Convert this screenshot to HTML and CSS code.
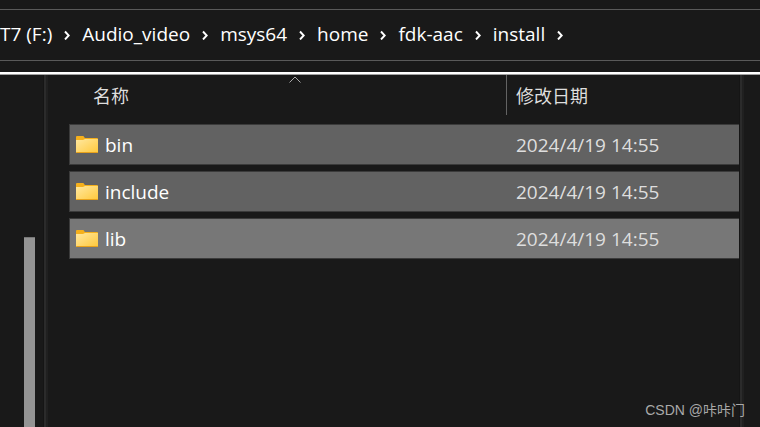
FILE: index.html
```html
<!DOCTYPE html>
<html lang="zh-CN">
<head>
  <meta charset="UTF-8" />
  <meta name="viewport" content="width=device-width, initial-scale=1.0"/>
  <title>install</title>
  <link rel="stylesheet" href="styles.css">
</head>
<body>
  <!-- Shared icons -->
  <svg class="sprite" aria-hidden="true">
    <defs>
      <linearGradient id="folderFill" x1="0" y1="0" x2="1" y2="1">
        <stop offset="0" stop-color="#ffe8a0"/>
        <stop offset="1" stop-color="#ffc83a"/>
      </linearGradient>
    </defs>
    <symbol id="folder" viewBox="0 0 22 18">
      <path d="M0 1Q0 0 1 0H7Q8 0 8 1L9 2H21Q22 2 22 3V8H0Z" fill="#f5b01c"/>
      <path d="M0 4H7L9 3H22V16Q22 17 21 17H1Q0 17 0 16Z" fill="url(#folderFill)"/>
      <path d="M0 16H22Q22 17 21 17H1Q0 17 0 16Z" fill="#e8a21b"/>
    </symbol>
    <symbol id="chevron" viewBox="0 0 6 10">
      <path d="M1 1.500L4.700 5.500L1 9.500" fill="none" stroke="#fff" stroke-width="1.900"/>
    </symbol>
  </svg>

  <!-- Address bar -->
  <nav class="address">
    <a href="#">T7 (F:)</a>
    <svg class="chevron"><use href="#chevron"/></svg>
    <a href="#">Audio_video</a>
    <svg class="chevron"><use href="#chevron"/></svg>
    <a href="#">msys64</a>
    <svg class="chevron"><use href="#chevron"/></svg>
    <a href="#">home</a>
    <svg class="chevron"><use href="#chevron"/></svg>
    <a href="#">fdk-aac</a>
    <svg class="chevron"><use href="#chevron"/></svg>
    <a href="#">install</a>
    <svg class="chevron"><use href="#chevron"/></svg>
  </nav>

  <main class="explorer">
    <div class="tree">
      <div class="scroll-thumb"></div>
    </div>
    <div class="splitter"></div>

    <table class="files">
      <thead>
        <tr>
          <th class="name">
            名称
            <svg class="sort" viewBox="0 0 12 7"><path d="M.5 6.500L6 1L11.500 6.500" fill="none" stroke="#a8a8a8"/></svg>
          </th>
          <th class="date">修改日期</th>
        </tr>
      </thead>
      <tbody>
        <tr>
          <td class="name"><svg class="folder"><use href="#folder"/></svg>bin</td>
          <td class="date">2024/4/19 14:55</td>
        </tr>
        <tr>
          <td class="name"><svg class="folder"><use href="#folder"/></svg>include</td>
          <td class="date">2024/4/19 14:55</td>
        </tr>
        <tr class="focused">
          <td class="name"><svg class="folder"><use href="#folder"/></svg>lib</td>
          <td class="date">2024/4/19 14:55</td>
        </tr>
      </tbody>
    </table>

    <div class="splitter"></div>
    <div class="preview"></div>
  </main>

  <div class="watermark">CSDN @咔咔门</div>
</body>
</html>
```

FILE: styles.css
```css
* {
  box-sizing: border-box;
}

body {
  margin: 0;
  min-height: 100vh;
  display: flex;
  flex-direction: column;
  background: #191919;
  color: #fff;
  font-family: "Open Sans", "Noto Sans", "Noto Sans CJK SC", sans-serif;
  font-size: 19px;
  line-height: 26px;
}

.sprite {
  position: absolute;
  width: 0;
  height: 0;
}

/* Address bar */
.address {
  display: flex;
  align-items: center;
  gap: 12px;
  height: 52px;
  margin-top: 9px;
  padding-bottom: 2px;
  border-top: 1px solid #5a5a5a;
  border-bottom: 1px solid #5a5a5a;
  white-space: nowrap;
}

.address a {
  color: #fff;
  text-decoration: none;
}

.chevron {
  flex: none;
  width: 6px;
  height: 10px;
  margin-top: 2px;
}

/* Panes */
.explorer {
  flex: 1;
  display: flex;
  margin-top: 11px;
  border-top: 2px solid #fff;
  box-shadow: inset 0 1px #a0a0a0;
}

.tree {
  width: 43px;
  padding: 163px 8px 0 24px;
  display: flex;
}

.scroll-thumb {
  flex: 1;
  background: #949494;
  border-top: 1px solid #777;
}

.splitter {
  width: 5px;
  margin-top: 1px;
  background: #202020;
  border-left: 1px solid #151515;
  box-shadow: inset 2px 0 #2b2b2b;
}

.preview {
  width: 16px;
}

/* File list */
.files {
  flex: 1;
  display: block;
  padding: 1px 0 0 21px;
}

.files tr {
  display: grid;
  grid-template-columns: 437px 1fr;
}

.files th {
  position: relative;
  height: 40px;
  padding: 8px 0 0 9px;
  color: #dedede;
  font-size: 18px;
  font-weight: normal;
  text-align: left;
}

.files thead,
.files tbody {
  display: grid;
}

.files tbody {
  gap: 6px;
  margin-top: 9px;
}

.files th.name {
  padding-left: 24px;
}

.files th.date {
  border-left: 1px solid #636363;
}

.sort {
  position: absolute;
  top: 1px;
  left: 220px;
  width: 12px;
  height: 7px;
}

.files tbody tr {
  height: 41px;
  align-items: center;
  background: #626262;
  border: 1px solid #3b3b3b;
  border-right: 0;
}

.files tbody tr.focused {
  background: #777;
}

.files td {
  padding: 0 0 0 9px;
}

.files td.name {
  display: flex;
  align-items: center;
  gap: 7px;
  padding-left: 6px;
}

.files td.date {
  color: #dedede;
}

.folder {
  width: 22px;
  height: 18px;
}

.watermark {
  position: absolute;
  right: 15px;
  bottom: 6px;
  color: #a9a9a9;
  font-family: "Liberation Sans", "Noto Sans CJK SC", sans-serif;
  font-size: 14px;
  line-height: 22px;
}
```
